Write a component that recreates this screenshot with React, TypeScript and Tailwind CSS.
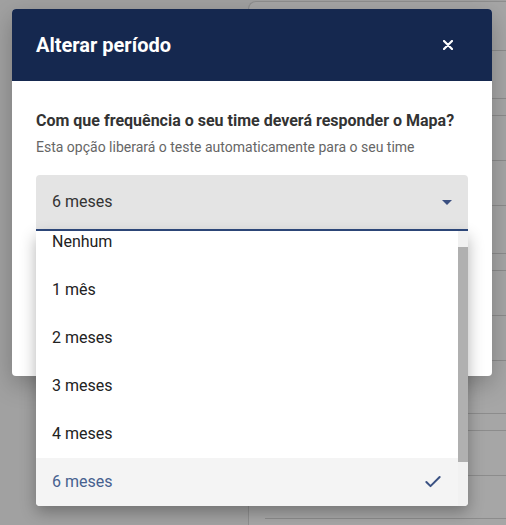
import { Check } from "lucide-react";

const options = ["Nenhum", "1 mês", "2 meses", "3 meses", "4 meses", "6 meses"];

const bgRows = [49, 48, 17, 45, 45, 48, 17, 45, 45, 53, 17, 45, 43];

export default function App() {
  const selected = "6 meses";

  return (
    <div
      className="relative h-[525px] w-[506px] overflow-hidden bg-[#a1a1a1]"
      style={{ fontFamily: "Roboto, 'Noto Sans', sans-serif" }}
    >
      {/* page behind the overlay */}
      <div className="pl-[248px] pt-px">
        <div className="h-[540px] rounded-tl-lg border-l border-t border-[#8e8e8e] bg-[#a6a6a6] pl-4">
          {bgRows.map((h, i) => (
            <div
              key={i}
              className="border-b border-[#8c8c8c]"
              style={{ height: h }}
            />
          ))}
        </div>
      </div>

      {/* modal */}
      <div className="absolute left-[12px] top-[9px] h-[367px] w-[480px] overflow-hidden rounded bg-white shadow-[0_8px_24px_rgba(0,0,0,0.25)]">
        <div className="flex h-[72px] items-center justify-between bg-[#15284f] pl-6 pr-[39px]">
          <h2 className="text-[20px] font-bold text-white">Alterar período</h2>
          <svg width="10" height="10" viewBox="0 0 10 10">
            <path
              d="M1 1L9 9M9 1L1 9"
              stroke="white"
              strokeWidth="2.2"
              strokeLinecap="round"
            />
          </svg>
        </div>

        <div className="px-6 pt-[30px]">
          <p className="text-[16px] font-bold leading-5 text-[#333]">
            Com que frequência o seu time deverá responder o Mapa?
          </p>
          <p className="mt-[6px] text-[14px] leading-5 text-[#666]">
            Esta opção liberará o teste automaticamente para o seu time
          </p>

          <div className="mt-[18px] flex h-[56px] items-center justify-between rounded-t border-b-2 border-[#2f4a7e] bg-[#e4e4e4] pl-4 pr-4">
            <span className="text-[16px] text-[#333]">{selected}</span>
            <svg width="10" height="5" viewBox="0 0 10 5">
              <path d="M0 0H10L5 5Z" fill="#3a4f80" />
            </svg>
          </div>
        </div>
      </div>

      {/* open dropdown */}
      <div className="absolute left-[36px] top-[231px] h-[275px] w-[432px] overflow-hidden rounded-b bg-white shadow-[0_6px_16px_rgba(0,0,0,0.3)]">
        <div className="-mt-[13px] pr-[10px]">
          {options.map((opt) => (
            <div
              key={opt}
              className={
                opt === selected
                  ? "flex h-12 items-center justify-between bg-[#f4f4f4] pl-4 pr-[15px] text-[16px] text-[#46618f]"
                  : "flex h-12 items-center pl-4 text-[16px] text-[#222]"
              }
            >
              <span>{opt}</span>
              {opt === selected && (
                <Check size={20} strokeWidth={2.4} className="text-[#3b5283]" />
              )}
            </div>
          ))}
        </div>

        <div className="absolute bottom-0 right-0 top-0 w-[10px] bg-[#f1f1f1]">
          <div className="mt-[16px] h-[215px] w-[10px] bg-[#b0b0b0]" />
        </div>
      </div>
    </div>
  );
}
